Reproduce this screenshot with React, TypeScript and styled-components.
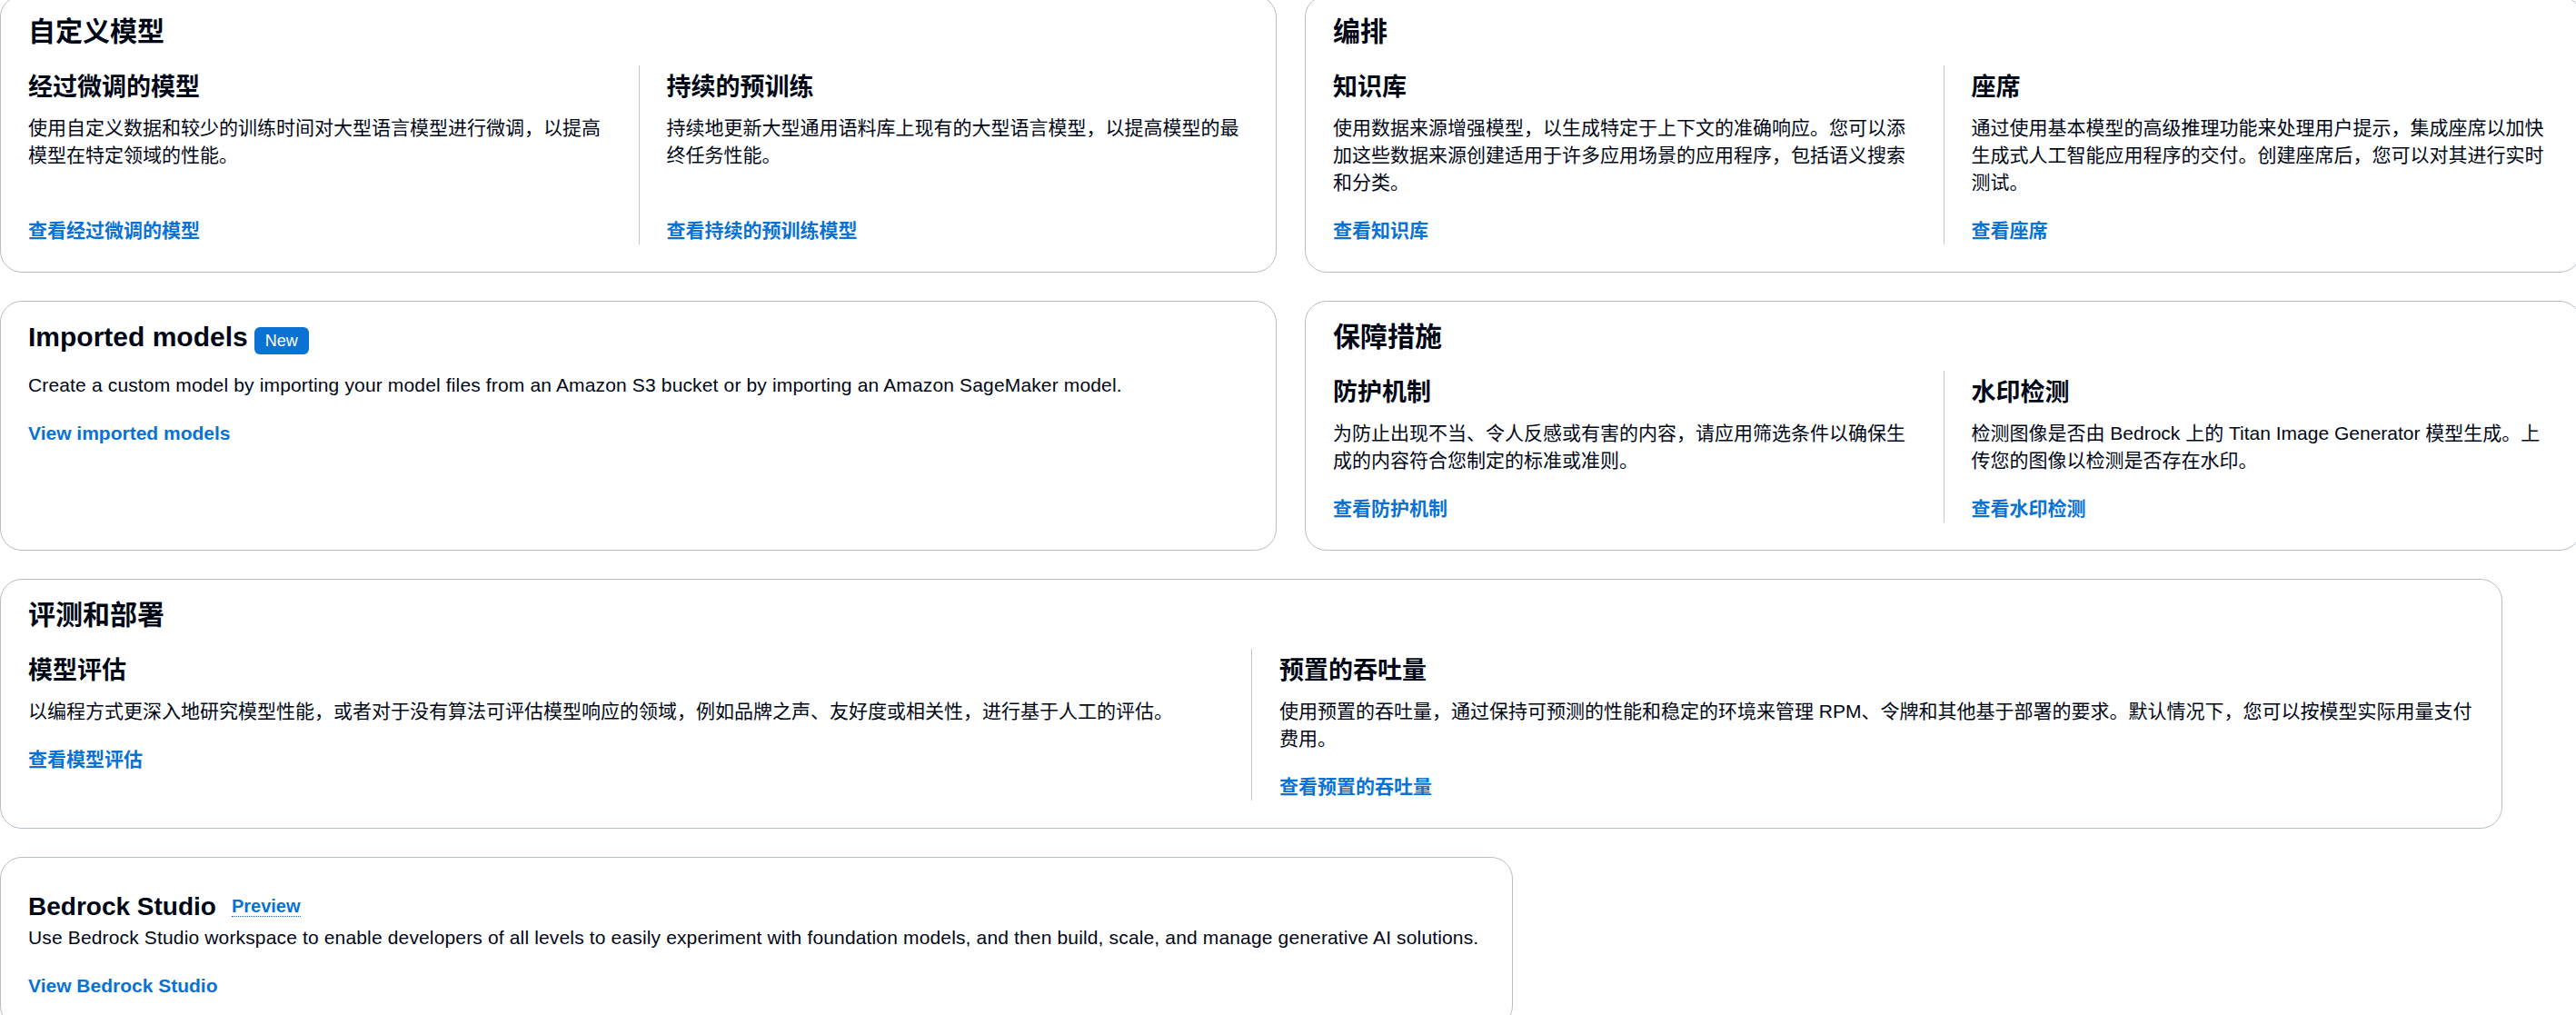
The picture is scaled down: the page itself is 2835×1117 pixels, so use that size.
import React from "react";
import styled, { createGlobalStyle } from "styled-components";

const GlobalStyle = createGlobalStyle`
  html, body {
    margin: 0;
    padding: 0;
    background: #fff;
    overflow: hidden;
  }
  body {
    font-family: "Liberation Sans", "Noto Sans CJK SC", sans-serif;
    color: #000716;
    -webkit-font-smoothing: antialiased;
  }
`;

const Page = styled.div`
  display: flex;
  flex-direction: column;
  gap: 31px;
  margin-top: -5px;
  width: 2841px;
`;

const Row = styled.div<{ $cols: string }>`
  display: grid;
  grid-template-columns: ${(p) => p.$cols};
  column-gap: 31px;
`;

const Card = styled.section<{ $padTop?: number }>`
  box-sizing: border-box;
  display: flex;
  flex-direction: column;
  background: #fff;
  border: 1px solid #b6bec9;
  border-radius: 24px;
  padding: ${(p) => p.$padTop ?? 21}px 30px 30px;
`;

const Header = styled.div<{ $gap?: number }>`
  display: flex;
  align-items: baseline;
  margin-bottom: ${(p) => p.$gap ?? 19}px;
`;

const Title = styled.h2<{ $small?: boolean }>`
  margin: 0;
  font-size: ${(p) => (p.$small ? 28 : 30)}px;
  line-height: ${(p) => (p.$small ? 34 : 36)}px;
  font-weight: 700;
`;

const Badge = styled.span`
  margin-left: 7px;
  padding: 3px 12px;
  border-radius: 6px;
  background: #0972d3;
  color: #fff;
  font-size: 18px;
  line-height: 24px;
`;

const InfoLink = styled.a`
  align-self: flex-start;
  margin: 5px 0 0 17px;
  font-size: 20px;
  line-height: 22px;
  font-weight: 700;
  color: #0972d3;
  text-decoration: none;
  border-bottom: 1px dotted #0972d3;
`;

const Columns = styled.div`
  flex: 1;
  display: grid;
  grid-template-columns: 1fr 1fr;
`;

const Column = styled.div`
  display: flex;
  flex-direction: column;
  padding: 8px 30px 0 0;

  & + & {
    border-left: 1px solid #c6c6cd;
    padding: 8px 0 0 30px;
  }
`;

const SubTitle = styled.h3`
  margin: 0 0 13px;
  font-size: 27px;
  line-height: 33px;
  font-weight: 700;
`;

const Body = styled.p<{ $grow?: boolean; $latin?: boolean; $nowrap?: boolean }>`
  margin: 0;
  font-size: 21px;
  line-height: 30px;
  flex: ${(p) => (p.$grow ? 1 : "none")};
  letter-spacing: ${(p) => (p.$latin ? "0.15px" : "normal")};
  white-space: ${(p) => (p.$nowrap ? "nowrap" : "normal")};
`;

const Link = styled.a`
  align-self: flex-start;
  margin-top: 23px;
  font-size: 21px;
  line-height: 30px;
  font-weight: 700;
  color: #0972d3;
  text-decoration: none;
`;

type Item = { sub: string; body: string; link: string };

const ColumnCard = ({
  title,
  items,
  stretch,
}: {
  title: string;
  items: Item[];
  stretch?: boolean;
}) => (
  <Card>
    <Header>
      <Title>{title}</Title>
    </Header>
    <Columns>
      {items.map((it) => (
        <Column key={it.sub}>
          <SubTitle>{it.sub}</SubTitle>
          <Body $grow={stretch}>{it.body}</Body>
          <Link href="#">{it.link}</Link>
        </Column>
      ))}
    </Columns>
  </Card>
);

const customModels: Item[] = [
  {
    sub: "经过微调的模型",
    body: "使用自定义数据和较少的训练时间对大型语言模型进行微调，以提高模型在特定领域的性能。",
    link: "查看经过微调的模型",
  },
  {
    sub: "持续的预训练",
    body: "持续地更新大型通用语料库上现有的大型语言模型，以提高模型的最终任务性能。",
    link: "查看持续的预训练模型",
  },
];

const orchestration: Item[] = [
  {
    sub: "知识库",
    body: "使用数据来源增强模型，以生成特定于上下文的准确响应。您可以添加这些数据来源创建适用于许多应用场景的应用程序，包括语义搜索和分类。",
    link: "查看知识库",
  },
  {
    sub: "座席",
    body: "通过使用基本模型的高级推理功能来处理用户提示，集成座席以加快生成式人工智能应用程序的交付。创建座席后，您可以对其进行实时测试。",
    link: "查看座席",
  },
];

const safeguards: Item[] = [
  {
    sub: "防护机制",
    body: "为防止出现不当、令人反感或有害的内容，请应用筛选条件以确保生成的内容符合您制定的标准或准则。",
    link: "查看防护机制",
  },
  {
    sub: "水印检测",
    body: "检测图像是否由 Bedrock 上的 Titan Image Generator 模型生成。上传您的图像以检测是否存在水印。",
    link: "查看水印检测",
  },
];

const evaluation: Item[] = [
  {
    sub: "模型评估",
    body: "以编程方式更深入地研究模型性能，或者对于没有算法可评估模型响应的领域，例如品牌之声、友好度或相关性，进行基于人工的评估。",
    link: "查看模型评估",
  },
  {
    sub: "预置的吞吐量",
    body: "使用预置的吞吐量，通过保持可预测的性能和稳定的环境来管理 RPM、令牌和其他基于部署的要求。默认情况下，您可以按模型实际用量支付费用。",
    link: "查看预置的吞吐量",
  },
];

export default function App() {
  return (
    <>
      <GlobalStyle />
      <Page>
        <Row $cols="1405px 1405px">
          <ColumnCard title="自定义模型" items={customModels} stretch />
          <ColumnCard title="编排" items={orchestration} stretch />
        </Row>
        <Row $cols="1405px 1405px">
          <Card>
            <Header>
              <Title>Imported models</Title>
              <Badge>New</Badge>
            </Header>
            <Body $latin>
              Create a custom model by importing your model files from an Amazon S3 bucket or by
              importing an Amazon SageMaker model.
            </Body>
            <Link href="#">View imported models</Link>
          </Card>
          <ColumnCard title="保障措施" items={safeguards} stretch />
        </Row>
        <Row $cols="2754px">
          <ColumnCard title="评测和部署" items={evaluation} />
        </Row>
        <Row $cols="1665px">
          <Card $padTop={37}>
            <Header $gap={2}>
              <Title $small>Bedrock Studio</Title>
              <InfoLink href="#">Preview</InfoLink>
            </Header>
            <Body $latin $nowrap>
              Use Bedrock Studio workspace to enable developers of all levels to easily experiment
              with foundation models, and then build, scale, and manage generative AI solutions.
            </Body>
            <Link href="#">View Bedrock Studio</Link>
          </Card>
        </Row>
      </Page>
    </>
  );
}
